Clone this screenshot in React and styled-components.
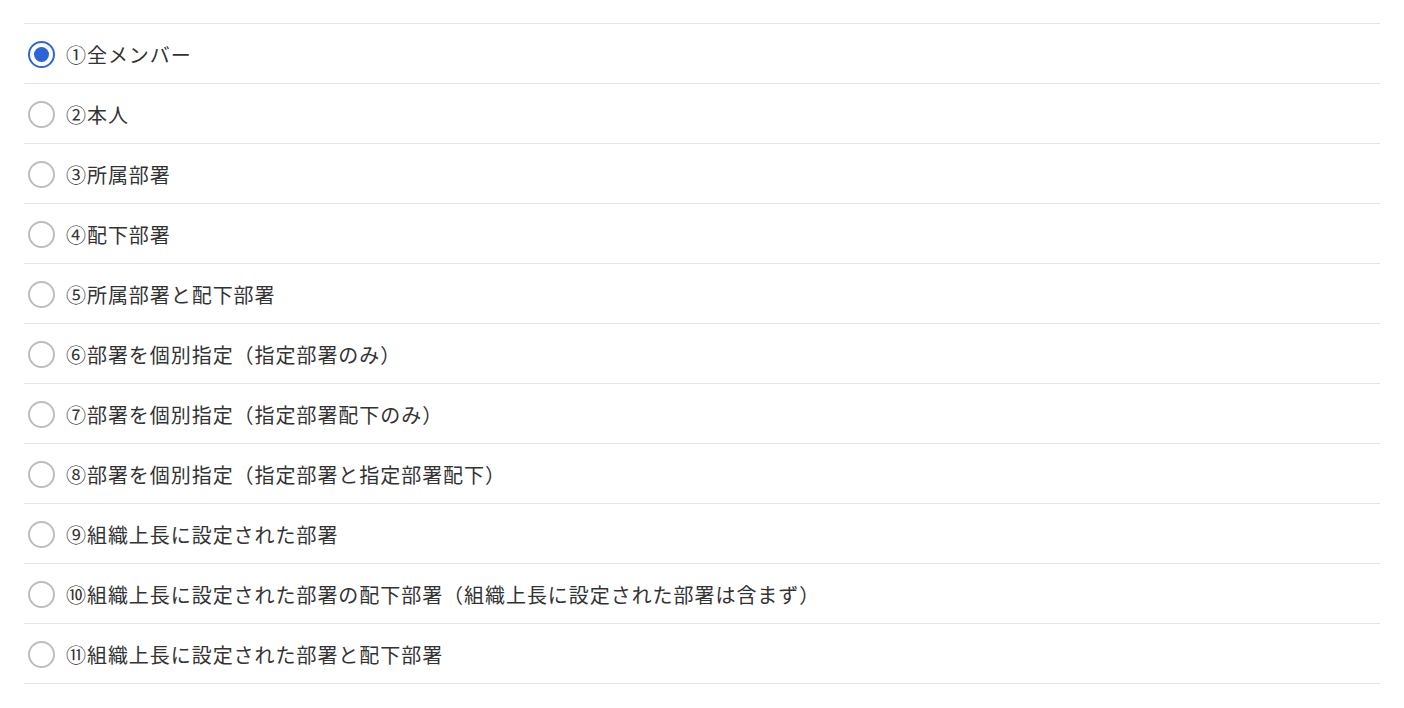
import React, { useState } from "react";
import styled, { createGlobalStyle } from "styled-components";

const Global = createGlobalStyle`
  html, body { margin: 0; padding: 0; background: #fff; }
  body { font-family: "Noto Sans CJK JP", "Noto Sans", sans-serif; }
`;

const Page = styled.div`
  padding: 23px 24px 0 24px;
`;

const List = styled.div`
  display: flex;
  flex-direction: column;
  border-top: 1px solid #e4e4e4;
`;

const Row = styled.label`
  display: flex;
  align-items: center;
  gap: 11px;
  height: 57px;
  padding: 2px 0 0 4px;
  border-bottom: 1px solid #e4e4e4;
  cursor: pointer;
`;

const Radio = styled.span`
  box-sizing: border-box;
  width: 27px;
  height: 27px;
  border-radius: 50%;
  border: 2px solid ${(p) => (p.$checked ? "#2d64d8" : "#bdbdbd")};
  display: flex;
  align-items: center;
  justify-content: center;
  flex-shrink: 0;
  &::after {
    content: "";
    width: 15px;
    height: 15px;
    border-radius: 50%;
    background: ${(p) => (p.$checked ? "#2d64d8" : "transparent")};
  }
`;

const Label = styled.span`
  font-size: 20px;
  letter-spacing: 0.95px;
  color: #333;
  line-height: 1;
  padding-top: 1px;
`;

const options = [
  "①全メンバー",
  "②本人",
  "③所属部署",
  "④配下部署",
  "⑤所属部署と配下部署",
  "⑥部署を個別指定（指定部署のみ）",
  "⑦部署を個別指定（指定部署配下のみ）",
  "⑧部署を個別指定（指定部署と指定部署配下）",
  "⑨組織上長に設定された部署",
  "⑩組織上長に設定された部署の配下部署（組織上長に設定された部署は含まず）",
  "⑪組織上長に設定された部署と配下部署",
];

export default function App() {
  const [sel, setSel] = useState(0);
  return (
    <Page>
      <Global />
      <List>
        {options.map((o, i) => (
          <Row key={i} onClick={() => setSel(i)}>
            <Radio $checked={sel === i} />
            <Label>{o}</Label>
          </Row>
        ))}
      </List>
    </Page>
  );
}
